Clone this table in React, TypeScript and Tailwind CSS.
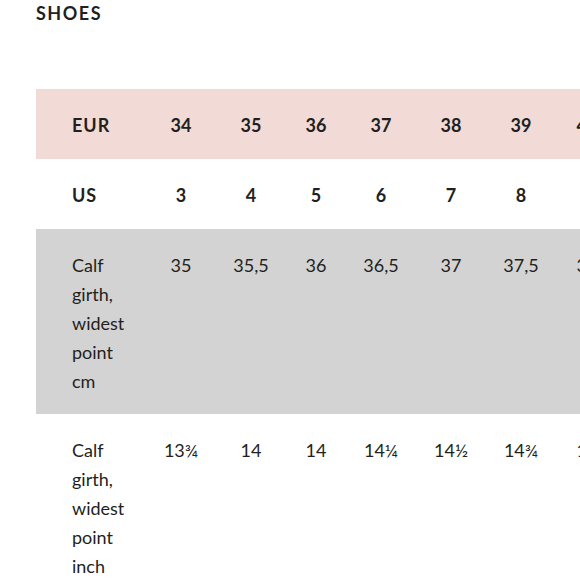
const widths = ['w-[70px]', 'w-[70px]', 'w-[60px]', 'w-[70px]', 'w-[70px]', 'w-[70px]', 'w-[62px]'];

const eur = ['34', '35', '36', '37', '38', '39', '40'];
const us = ['3', '4', '5', '6', '7', '8', '9'];
const cm = ['35', '35,5', '36', '36,5', '37', '37,5', '38'];
const inch = ['13¾', '14', '14', '14¼', '14½', '14¾', '15'];

function Row({ label, values, bold, bg, tall }: { label: string; values: string[]; bold?: boolean; bg: string; tall?: boolean }) {
  return (
    <div className={`flex w-[800px] ${bg} ${tall ? 'pt-[22px] pb-[18px]' : 'h-[70px] items-center pt-[3px]'}`}>
      <div className={`w-[110px] shrink-0 pl-9 ${bold ? 'font-bold tracking-[1px]' : ''}`}>
        {tall ? (
          <div className="flex flex-col leading-[29px]">
            {label.split(' ').map((w, i) => (
              <span key={i}>{w}</span>
            ))}
          </div>
        ) : (
          label
        )}
      </div>
      {values.map((v, i) => (
        <div key={i} className={`${widths[i]} shrink-0 text-center ${bold ? 'font-bold' : ''} ${tall ? 'leading-[29px]' : ''}`}>
          {v}
        </div>
      ))}
    </div>
  );
}

export default function App() {
  return (
    <div className="w-[580px] h-[580px] overflow-hidden bg-white text-[#231f20] text-[18px]" style={{ fontFamily: 'Lato, "Noto Sans", sans-serif' }}>
      <h1 className="pl-9 pt-[1px] h-[89px] text-[18px] font-bold tracking-[1.5px] leading-[24px]">SHOES</h1>
      <div className="pl-9">
        <Row label="EUR" values={eur} bold bg="bg-[#f2dbd6]" />
        <Row label="US" values={us} bold bg="bg-white" />
        <Row label="Calf girth, widest point cm" values={cm} bg="bg-[#d3d3d3]" tall />
        <Row label="Calf girth, widest point inch" values={inch} bg="bg-white" tall />
      </div>
    </div>
  );
}
